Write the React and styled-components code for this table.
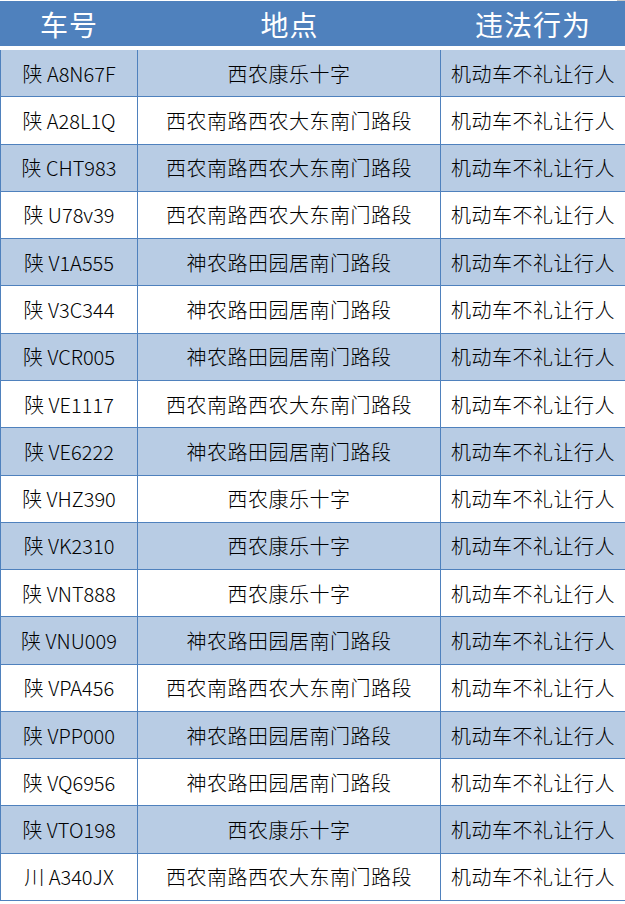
import React from 'react';
import styled, { createGlobalStyle } from 'styled-components';

const GlobalStyle = createGlobalStyle`
  html, body {
    margin: 0;
    padding: 0;
    background: #ffffff;
  }
  body {
    font-family: "Noto Sans CJK SC", "Liberation Sans", sans-serif;
  }
`;

const Page = styled.div`
  position: relative;
  width: 625px;
  height: 904px;
  overflow: hidden;
  background: #ffffff;
`;

const Corner = styled.div`
  position: absolute;
  top: 0;
  right: 0;
  width: 8px;
  height: 1px;
  background: #c8c8c8;
`;

const HeaderRow = styled.div`
  display: grid;
  grid-template-columns: 138px 303px 1fr;
  height: 45px;
  margin-top: 1px;
  background: #4f81bd;
  border-bottom: 4px solid #ffffff;
`;

const HeaderCell = styled.div`
  display: flex;
  align-items: center;
  justify-content: center;
  color: #ffffff;
  font-size: 28px;
  font-weight: 400;
  letter-spacing: 1px;
`;

const Body = styled.div`
  display: grid;
  grid-template-columns: 137px 303px 1fr;
  grid-template-rows: repeat(18, 1fr);
  height: 851px;
  border-left: 1px solid #4f81bd;
`;

const Cell = styled.div`
  display: flex;
  align-items: center;
  justify-content: center;
  box-sizing: border-box;
  font-size: 20px;
  font-weight: 300;
  color: #000000;
  white-space: nowrap;
  background: ${(p) => (p.$shade ? '#b8cce4' : '#ffffff')};
  border-bottom: 1px solid #4f81bd;
  border-right: ${(p) => (p.$last ? 'none' : '1px solid #4f81bd')};
  letter-spacing: ${(p) => (p.$wide ? '0.5px' : '0')};
`;

const rows = [
  ['陕 A8N67F', '西农康乐十字'],
  ['陕 A28L1Q', '西农南路西农大东南门路段'],
  ['陕 CHT983', '西农南路西农大东南门路段'],
  ['陕 U78v39', '西农南路西农大东南门路段'],
  ['陕 V1A555', '神农路田园居南门路段'],
  ['陕 V3C344', '神农路田园居南门路段'],
  ['陕 VCR005', '神农路田园居南门路段'],
  ['陕 VE1117', '西农南路西农大东南门路段'],
  ['陕 VE6222', '神农路田园居南门路段'],
  ['陕 VHZ390', '西农康乐十字'],
  ['陕 VK2310', '西农康乐十字'],
  ['陕 VNT888', '西农康乐十字'],
  ['陕 VNU009', '神农路田园居南门路段'],
  ['陕 VPA456', '西农南路西农大东南门路段'],
  ['陕 VPP000', '神农路田园居南门路段'],
  ['陕 VQ6956', '神农路田园居南门路段'],
  ['陕 VTO198', '西农康乐十字'],
  ['川 A340JX', '西农南路西农大东南门路段'],
];

const App = () => {
  return (
    <Page>
      <GlobalStyle />
      <Corner />
      <HeaderRow>
        <HeaderCell>车号</HeaderCell>
        <HeaderCell>地点</HeaderCell>
        <HeaderCell>违法行为</HeaderCell>
      </HeaderRow>
      <Body>
        {rows.map(([plate, place], i) => (
          <React.Fragment key={plate}>
            <Cell $shade={i % 2 === 0}>{plate}</Cell>
            <Cell $shade={i % 2 === 0} $wide>{place}</Cell>
            <Cell $shade={i % 2 === 0} $wide $last>机动车不礼让行人</Cell>
          </React.Fragment>
        ))}
      </Body>
    </Page>
  );
};

export default App;
